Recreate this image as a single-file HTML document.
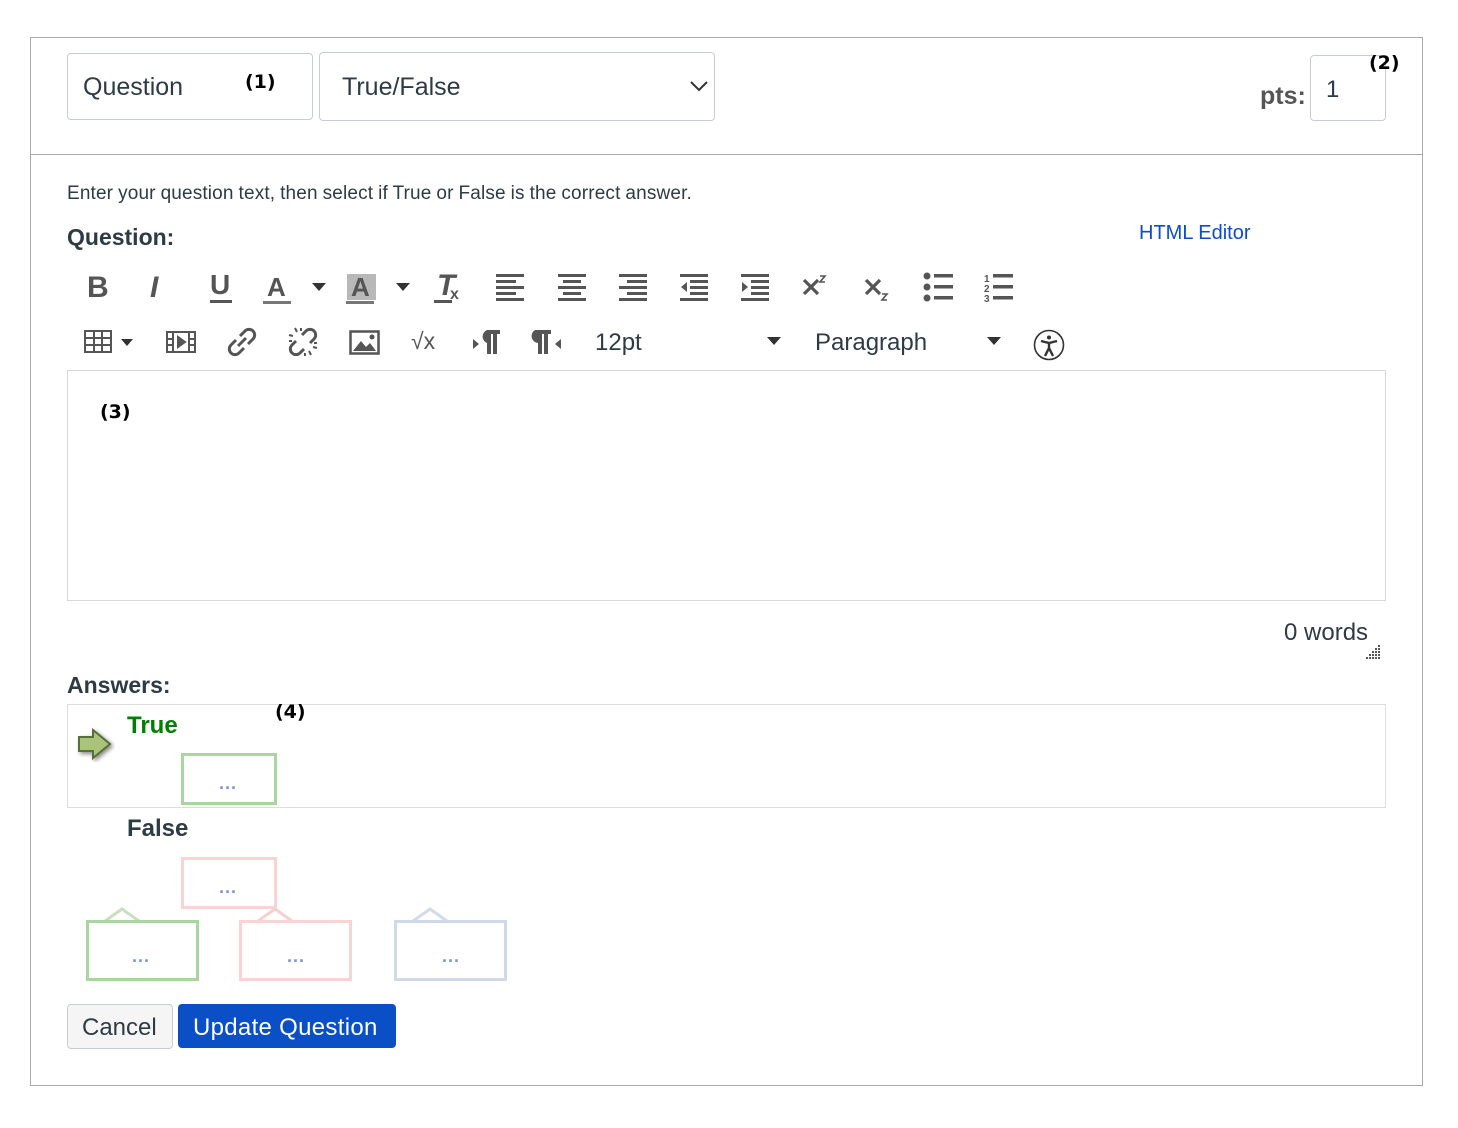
<!DOCTYPE html>
<html><head><meta charset="utf-8"><style>
body{margin:0;width:1458px;height:1128px;background:#fff;font-family:"Liberation Sans",sans-serif;color:#2d3b45;position:relative;overflow:hidden}
.a{position:absolute}
.box{position:absolute;border:1px solid #c7cdd1;border-radius:4px;background:#fff}
.tb{position:absolute;font-size:30px;color:#555;line-height:1}
svg.i{position:absolute}
.dot{position:absolute;color:#7b97d8;font-size:18px;font-weight:bold;letter-spacing:1px}
.bold{font-weight:bold;color:#000;font-size:19px;font-family:"DejaVu Sans",sans-serif}
</style></head><body>
<div class="a" style="left:30px;top:37px;width:1391px;height:1047px;border:1px solid #aaa"></div>
<div class="a" style="left:31px;top:154px;width:1391px;height:1px;background:#aaa"></div>

<div class="box" style="left:67px;top:53px;width:244px;height:65px"></div>
<div class="a" style="left:83px;top:73px;font-size:25px">Question</div>
<div class="a bold" style="left:245px;top:71px">(1)</div>
<div class="box" style="left:319px;top:52px;width:394px;height:67px"></div>
<div class="a" style="left:342px;top:73px;font-size:25px">True/False</div>
<svg class="i" style="left:690px;top:80px" width="18" height="12"><path d="M1 2l8 8 8-8" fill="none" stroke="#333" stroke-width="2"/></svg>

<div class="a" style="left:1260px;top:82px;font-size:25px;color:#555;font-weight:bold">pts:</div>
<div class="box" style="left:1310px;top:55px;width:74px;height:64px"></div>
<div class="a" style="left:1326px;top:76px;font-size:24px">1</div>
<div class="a bold" style="left:1369px;top:52px">(2)</div>

<div class="a" style="left:67px;top:183px;font-size:19px;letter-spacing:0.15px;word-spacing:-0.5px">Enter your question text, then select if True or False is the correct answer.</div>
<div class="a" style="left:67px;top:224px;font-size:23px;font-weight:bold">Question:</div>
<div class="a" style="left:1139px;top:222px;font-size:20px;color:#0b4fc6">HTML Editor</div>

<!-- toolbar row1 -->
<div class="tb" style="left:87px;top:273px;font-weight:bold">B</div>
<div class="tb" style="left:150px;top:273px;font-style:italic;font-weight:bold">I</div>
<div class="tb" style="left:210px;top:271px;font-size:28px;font-weight:bold">U</div>
<div class="a" style="left:210px;top:300px;width:22px;height:3px;background:#555"></div>
<div class="tb" style="left:267px;top:274px;font-size:26px;font-weight:bold">A</div>
<div class="a" style="left:263px;top:301px;width:28px;height:3px;background:#777"></div>
<svg class="i" style="left:312px;top:283px" width="14" height="8"><path d="M0 0h14L7 8z" fill="#333"/></svg>
<div class="a" style="left:347px;top:274px;width:29px;height:26px;background:#b8b8b8"></div>
<div class="tb" style="left:351px;top:274px;font-size:26px;font-weight:bold">A</div>
<div class="a" style="left:346px;top:301px;width:28px;height:3px;background:#777"></div>
<svg class="i" style="left:396px;top:283px" width="14" height="8"><path d="M0 0h14L7 8z" fill="#333"/></svg>
<div class="tb" style="left:437px;top:271px;font-style:italic;font-weight:bold">T</div>
<div class="a" style="left:450px;top:286px;font-size:16px;color:#555;font-weight:bold">x</div>
<div class="a" style="left:434px;top:300px;width:18px;height:3px;background:#555"></div>
<svg class="i" style="left:494px;top:273px" width="300" height="30" fill="#555">
<rect x="2" y="1" width="28" height="3"/><rect x="2" y="7" width="20" height="3"/><rect x="2" y="13" width="28" height="3"/><rect x="2" y="19" width="20" height="3"/><rect x="2" y="25" width="28" height="3"/>
<g transform="translate(62 0)"><rect x="2" y="1" width="28" height="3"/><rect x="7" y="7" width="18" height="3"/><rect x="2" y="13" width="28" height="3"/><rect x="7" y="19" width="18" height="3"/><rect x="2" y="25" width="28" height="3"/></g>
<g transform="translate(123 0)"><rect x="2" y="1" width="28" height="3"/><rect x="10" y="7" width="20" height="3"/><rect x="2" y="13" width="28" height="3"/><rect x="10" y="19" width="20" height="3"/><rect x="2" y="25" width="28" height="3"/></g>
<g transform="translate(184 0)"><rect x="2" y="1" width="28" height="3"/><rect x="12" y="7" width="18" height="3"/><rect x="12" y="13" width="18" height="3"/><rect x="12" y="19" width="18" height="3"/><rect x="2" y="25" width="28" height="3"/><path d="M9 9v10l-6-5z"/></g>
<g transform="translate(245 0)"><rect x="2" y="1" width="28" height="3"/><rect x="12" y="7" width="18" height="3"/><rect x="12" y="13" width="18" height="3"/><rect x="12" y="19" width="18" height="3"/><rect x="2" y="25" width="28" height="3"/><path d="M3 9v10l6-5z"/></g>
</svg>
<svg class="i" style="left:800px;top:270px" width="100" height="34" fill="none" stroke="#555" stroke-width="3.2">
<path d="M4 10l14 14M18 10L4 24"/><path d="M20 6h5l-5 6h5" stroke-width="1.6"/>
<g transform="translate(62 0)"><path d="M4 10l14 14M18 10L4 24"/><path d="M20 24h5l-5 6h5" stroke-width="1.6"/></g>
</svg>
<svg class="i" style="left:922px;top:272px" width="100" height="32" fill="#555">
<circle cx="5" cy="4" r="3.5"/><circle cx="5" cy="15" r="3.5"/><circle cx="5" cy="26" r="3.5"/><rect x="12" y="2" width="19" height="3.5"/><rect x="12" y="13" width="19" height="3.5"/><rect x="12" y="24" width="19" height="3.5"/>
<g transform="translate(62 0)"><text x="0" y="10" font-size="10" font-weight="bold" font-family="Liberation Sans">1</text><text x="0" y="20" font-size="10" font-weight="bold" font-family="Liberation Sans">2</text><text x="0" y="30" font-size="10" font-weight="bold" font-family="Liberation Sans">3</text><rect x="9" y="2" width="20" height="3.5"/><rect x="9" y="13" width="20" height="3.5"/><rect x="9" y="24" width="20" height="3.5"/></g>
</svg>

<!-- row2 -->
<svg class="i" style="left:83px;top:329px" width="300" height="28" fill="none" stroke="#555" stroke-width="2">
<rect x="2" y="2" width="26" height="21"/><path d="M2 9h26M2 16h26M11 2v21M19 2v21"/>
<path d="M38 10h12l-6 7z" fill="#333" stroke="none"/>
<g transform="translate(83 0)"><rect x="1" y="3" width="28" height="20"/><path d="M7 3v20M23 3v20M1 10h6M1 16h6M23 10h6M23 16h6"/><path d="M12 8v10l7-5z" fill="#555"/></g>
</svg>
<svg class="i" style="left:226px;top:326px" width="34" height="32" fill="none" stroke="#555" stroke-width="3"><path d="M14 10l5-5a5 5 0 0 1 8 8l-5 5M18 22l-5 5a5 5 0 0 1-8-8l5-5M12 20l8-8"/></svg>
<svg class="i" style="left:287px;top:326px" width="34" height="32" fill="none" stroke="#555" stroke-width="3"><path d="M15 9l4-4a5 5 0 0 1 8 8l-4 4M17 23l-4 4a5 5 0 0 1-8-8l4-4"/><path d="M8 2l2 4M2 9l4 1M24 29l-2-4M30 22l-4-1M14 2v3M2 15h3M18 30v-3M30 17h-3" stroke-width="2"/></svg>
<svg class="i" style="left:349px;top:330px" width="32" height="26"><rect x="1.5" y="1.5" width="28" height="22" fill="none" stroke="#555" stroke-width="2.5"/><path d="M4 21l8-10 5 6 4-4 6 8z" fill="#555"/><circle cx="23" cy="7" r="2.5" fill="#555"/></svg>
<div class="tb" style="left:411px;top:330px;font-size:23px">√x</div>
<svg class="i" style="left:472px;top:328px" width="100" height="28" fill="#555">
<path d="M12 2h16v4h-3v20h-4V6h-2v20h-4V15a7 7 0 0 1 0-13z"/><path d="M1 11l6 5-6 5z"/>
<g transform="translate(61 0)"><path d="M2 2h16v4h-3v20h-4V6h-2v20H5V15a7 7 0 0 1-3-13z"/><path d="M28 11l-6 5 6 5z"/></g>
</svg>
<div class="a" style="left:595px;top:329px;font-size:24px">12pt</div>
<svg class="i" style="left:767px;top:337px" width="14" height="8"><path d="M0 0h14L7 8z" fill="#333"/></svg>
<div class="a" style="left:815px;top:329px;font-size:24px">Paragraph</div>
<svg class="i" style="left:987px;top:337px" width="14" height="8"><path d="M0 0h14L7 8z" fill="#333"/></svg>
<svg class="i" style="left:1033px;top:329px" width="32" height="32" fill="none" stroke="#333" stroke-width="1.6"><circle cx="16" cy="16" r="14.5"/><circle cx="16" cy="8.5" r="2" fill="#333" stroke="none"/><path d="M8 12l8 2 8-2M16 14v5l-4 8M16 19l4 8" stroke-width="2.4"/></svg>

<div class="a" style="left:67px;top:370px;width:1317px;height:229px;border:1px solid #d5d8da"></div>
<div class="a bold" style="left:100px;top:401px">(3)</div>

<div class="a" style="left:1284px;top:619px;font-size:24px">0 words</div>
<svg class="i" style="left:1364px;top:644px" width="18" height="16" fill="#555"><rect x="14" y="1" width="2" height="2"/><rect x="11" y="4" width="2" height="2"/><rect x="14" y="4" width="2" height="2"/><rect x="8" y="7" width="2" height="2"/><rect x="11" y="7" width="2" height="2"/><rect x="14" y="7" width="2" height="2"/><rect x="5" y="10" width="2" height="2"/><rect x="8" y="10" width="2" height="2"/><rect x="11" y="10" width="2" height="2"/><rect x="14" y="10" width="2" height="2"/><rect x="2" y="13" width="2" height="2"/><rect x="5" y="13" width="2" height="2"/><rect x="8" y="13" width="2" height="2"/><rect x="11" y="13" width="2" height="2"/><rect x="14" y="13" width="2" height="2"/></svg>

<div class="a" style="left:67px;top:672px;font-size:23px;font-weight:bold">Answers:</div>
<div class="a" style="left:67px;top:704px;width:1317px;height:102px;border:1px solid #ddd"></div>
<svg class="i" style="left:75px;top:726px" width="40" height="36"><path d="M4 11h14V4l17 14-17 14v-7H4z" fill="#a9c47a" stroke="#5a6e3a" stroke-width="2" filter="drop-shadow(2px 2px 2px #888)"/></svg>
<div class="a" style="left:127px;top:712px;font-size:24px;font-weight:bold;color:#008000">True</div>
<div class="a bold" style="left:275px;top:701px">(4)</div>
<div class="a" style="left:181px;top:753px;width:90px;height:46px;border:3px solid #a8d5a0"></div>
<div class="dot" style="left:219px;top:773px">...</div>
<div class="a" style="left:127px;top:815px;font-size:24px;font-weight:bold">False</div>
<div class="a" style="left:181px;top:857px;width:90px;height:46px;border:3px solid #fad4d4"></div>
<div class="dot" style="left:219px;top:877px">...</div>

<svg class="i" style="left:80px;top:905px" width="440" height="80" fill="none" stroke-width="3">
<path d="M25 16l17-12 17 12" stroke="#c8e0c0"/><rect x="7.5" y="16.5" width="110" height="58" stroke="#a8d5a0"/>
<path d="M178 16l17-12 17 12" stroke="#f5d0d0"/><rect x="160.5" y="16.5" width="110" height="58" stroke="#fad4d4"/>
<path d="M333 16l17-12 17 12" stroke="#d4dbe8"/><rect x="315.5" y="16.5" width="110" height="58" stroke="#d0d9e8"/>
</svg>
<div class="dot" style="left:132px;top:946px">...</div>
<div class="dot" style="left:287px;top:946px">...</div>
<div class="dot" style="left:442px;top:946px">...</div>

<div class="a" style="left:67px;top:1004px;width:104px;height:43px;border:1px solid #c7cdd1;border-radius:4px;background:#f5f5f5"></div>
<div class="a" style="left:82px;top:1014px;font-size:24px">Cancel</div>
<div class="a" style="left:178px;top:1004px;width:218px;height:44px;border-radius:4px;background:#0b4fc6"></div>
<div class="a" style="left:193px;top:1014px;font-size:24px;color:#fff;letter-spacing:0.3px">Update Question</div>
</body></html>
